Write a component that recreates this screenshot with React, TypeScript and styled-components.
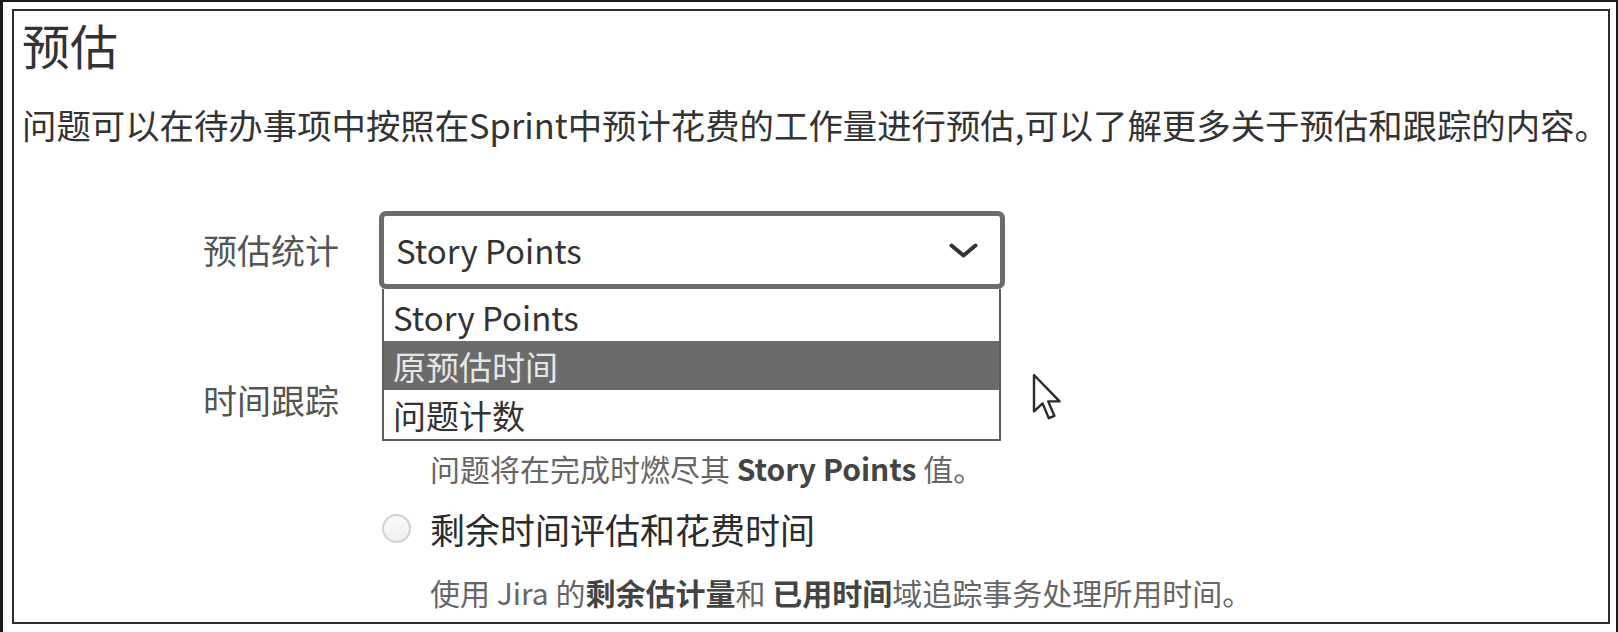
import styled, { createGlobalStyle } from "styled-components";

const GlobalStyle = createGlobalStyle`
  html,
  body {
    margin: 0;
    padding: 0;
    background: #fff;
    font-family: "Noto Sans CJK SC", "Noto Sans", sans-serif;
  }

  * {
    box-sizing: border-box;
  }
`;

const Frame = styled.div`
  width: 1618px;
  height: 632px;
  border-left: 3px solid #1a1a1a;
  border-top: 2px solid #1a1a1a;
  border-right: 2px solid #1a1a1a;
  padding: 7px 6px 8px 9px;
  background: #fff;
`;

const Panel = styled.section`
  width: 1598px;
  height: 615px;
  border: 2px solid #2e2e2e;
  padding: 5px 0 0 8px;
  overflow: hidden;
  color: #333;
`;

const Title = styled.h1`
  margin: 0;
  font-size: 48px;
  line-height: 56px;
  font-weight: 400;
  color: #333;
`;

const Intro = styled.p`
  margin: 30px 0 0;
  font-size: 34.4px;
  line-height: 44px;
  color: #333;
  white-space: nowrap;
`;

const Form = styled.div`
  margin: 65px 0 0 181px;
  display: flex;
  flex-direction: column;
`;

const Row = styled.div<{ $top?: number; $align?: string }>`
  display: grid;
  grid-template-columns: 176px 626px;
  align-items: ${(p) => p.$align || "center"};
  margin-top: ${(p) => p.$top || 0}px;
`;

const Label = styled.div`
  font-size: 34px;
  line-height: 48px;
  color: #555;
`;

const SelectWrap = styled.div`
  position: relative;
`;

const SelectBox = styled.div`
  height: 78px;
  border: 5px solid #6b6b6b;
  border-radius: 7px;
  padding: 0 22px 0 12px;
  display: flex;
  align-items: center;
  justify-content: space-between;
  background: #fff;
  font-size: 33px;
  color: #333;
`;

const Menu = styled.ul`
  position: absolute;
  top: 100%;
  left: 3px;
  width: 619px;
  margin: 0;
  padding: 3px 0 0;
  list-style: none;
  background: #fff;
  border: 2px solid #5e5e5e;
  border-top: none;
  z-index: 2;
`;

const Item = styled.li<{ $active?: boolean }>`
  height: 49px;
  padding-left: 9px;
  display: flex;
  align-items: center;
  font-size: 33px;
  color: ${(p) => (p.$active ? "#e6e6e6" : "#333")};
  background: ${(p) => (p.$active ? "#6b6b6b" : "transparent")};
`;

const Pointer = styled.svg`
  position: absolute;
  left: 653px;
  top: 162px;
  z-index: 3;
`;

const Options = styled.div`
  display: flex;
  flex-direction: column;
  padding-left: 3px;
`;

const Option = styled.label<{ $top?: number }>`
  height: 48px;
  margin-top: ${(p) => p.$top || 0}px;
  display: flex;
  align-items: center;
  gap: 19px;
  font-size: 35px;
  color: #2b2b2b;
  white-space: nowrap;
`;

const Radio = styled.span`
  width: 29px;
  height: 29px;
  border-radius: 50%;
  border: 2px solid #d2d2d2;
  background: linear-gradient(#fafafa, #f0f0f0);
  flex: none;
`;

const Hint = styled.div<{ $top?: number }>`
  padding-left: 48px;
  margin-top: ${(p) => p.$top || 0}px;
  font-size: 30px;
  line-height: 40px;
  color: #666;
  white-space: nowrap;

  b {
    color: #444;
    font-weight: 700;
  }
`;

export default function App() {
  return (
    <>
      <GlobalStyle />
      <Frame>
        <Panel>
          <Title>预估</Title>
          <Intro>
            问题可以在待办事项中按照在Sprint中预计花费的工作量进行预估,可以了解更多关于预估和跟踪的内容。
          </Intro>
          <Form>
            <Row>
              <Label>预估统计</Label>
              <SelectWrap>
                <SelectBox>
                  <span>Story Points</span>
                  <svg width="29" height="15" viewBox="0 0 29 15">
                    <polyline
                      points="2.5,2.5 14.5,12.5 26.5,2.5"
                      fill="none"
                      stroke="#333"
                      strokeWidth="4"
                      strokeLinecap="round"
                      strokeLinejoin="round"
                    />
                  </svg>
                </SelectBox>
                <Menu>
                  <Item>Story Points</Item>
                  <Item $active>原预估时间</Item>
                  <Item>问题计数</Item>
                </Menu>
                <Pointer width="32" height="50" viewBox="0 0 16 25">
                  <path
                    d="M1 1 L1 19.2 L5.3 15.2 L8.4 22.6 L11.2 21.4 L8.1 14.2 L13.8 14.2 Z"
                    fill="#fff"
                    stroke="#2b2b2b"
                    strokeWidth="1.2"
                    strokeLinejoin="round"
                  />
                </Pointer>
              </SelectWrap>
            </Row>
            <Row $top={87} $align="start">
              <Label>时间跟踪</Label>
              <Options>
                <Option>
                  <Radio />
                </Option>
                <Hint $top={24}>
                  问题将在完成时燃尽其 <b>Story Points</b> 值。
                </Hint>
                <Option $top={16}>
                  <Radio />
                  剩余时间评估和花费时间
                </Option>
                <Hint $top={20}>
                  使用 Jira 的<b>剩余估计量</b>和 <b>已用时间</b>域追踪事务处理所用时间。
                </Hint>
              </Options>
            </Row>
          </Form>
        </Panel>
      </Frame>
    </>
  );
}
